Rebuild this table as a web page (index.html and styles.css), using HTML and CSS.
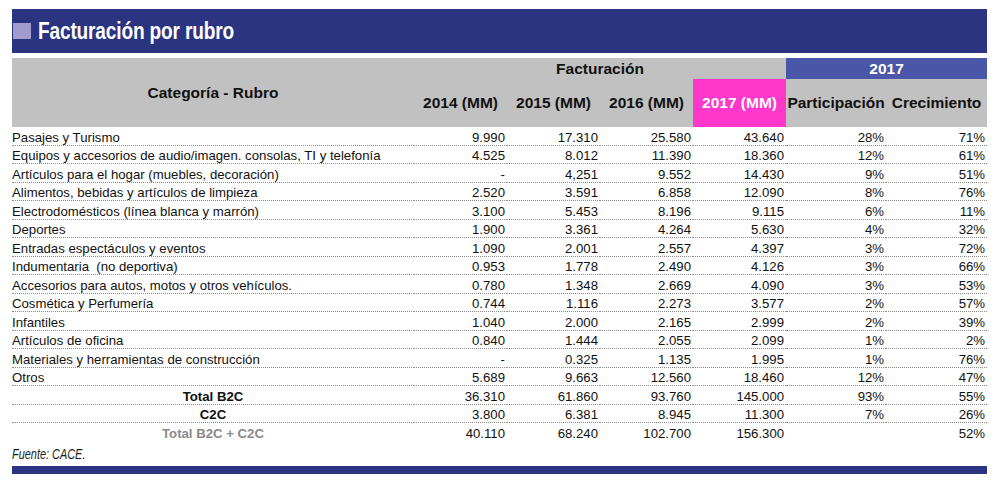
FILE: index.html
```html
<!DOCTYPE html>
<html lang="es">
<head>
<meta charset="utf-8">
<title>Facturación por rubro</title>
<link rel="stylesheet" href="styles.css">
</head>
<body>
<div class="page">
  <div class="titlebar">
    <span class="square"></span>
    <h1 class="title">Facturación por rubro</h1>
  </div>
  <table class="data">
    <colgroup>
      <col class="c-cat"><col class="c-num"><col class="c-num"><col class="c-num"><col class="c-num"><col class="c-part"><col class="c-crec">
    </colgroup>
    <thead>
      <tr class="h1">
        <th rowspan="2" class="hcat">Categoría - Rubro</th>
        <th colspan="4" class="hfact">Facturación</th>
        <th colspan="2" class="hyear">2017</th>
      </tr>
      <tr class="h2">
        <th>2014 (MM)</th>
        <th>2015 (MM)</th>
        <th>2016 (MM)</th>
        <th class="pink">2017 (MM)</th>
        <th>Participación</th>
        <th>Crecimiento</th>
      </tr>
    </thead>
    <tbody>
      <tr><td>Pasajes y Turismo</td><td>9.990</td><td>17.310</td><td>25.580</td><td>43.640</td><td>28%</td><td>71%</td></tr>
      <tr><td>Equipos y accesorios de audio/imagen. consolas, TI y telefonía</td><td>4.525</td><td>8.012</td><td>11.390</td><td>18.360</td><td>12%</td><td>61%</td></tr>
      <tr><td>Artículos para el hogar (muebles, decoración)</td><td>-</td><td>4,251</td><td>9.552</td><td>14.430</td><td>9%</td><td>51%</td></tr>
      <tr><td>Alimentos, bebidas y artículos de limpieza</td><td>2.520</td><td>3.591</td><td>6.858</td><td>12.090</td><td>8%</td><td>76%</td></tr>
      <tr><td>Electrodomésticos (línea blanca y marrón)</td><td>3.100</td><td>5.453</td><td>8.196</td><td>9.115</td><td>6%</td><td>11%</td></tr>
      <tr><td>Deportes</td><td>1.900</td><td>3.361</td><td>4.264</td><td>5.630</td><td>4%</td><td>32%</td></tr>
      <tr><td>Entradas espectáculos y eventos</td><td>1.090</td><td>2.001</td><td>2.557</td><td>4.397</td><td>3%</td><td>72%</td></tr>
      <tr><td>Indumentaria &nbsp;(no deportiva)</td><td>0.953</td><td>1.778</td><td>2.490</td><td>4.126</td><td>3%</td><td>66%</td></tr>
      <tr><td>Accesorios para autos, motos y otros vehículos.</td><td>0.780</td><td>1.348</td><td>2.669</td><td>4.090</td><td>3%</td><td>53%</td></tr>
      <tr><td>Cosmética y Perfumería</td><td>0.744</td><td>1.116</td><td>2.273</td><td>3.577</td><td>2%</td><td>57%</td></tr>
      <tr><td>Infantiles</td><td>1.040</td><td>2.000</td><td>2.165</td><td>2.999</td><td>2%</td><td>39%</td></tr>
      <tr><td>Artículos de oficina</td><td>0.840</td><td>1.444</td><td>2.055</td><td>2.099</td><td>1%</td><td>2%</td></tr>
      <tr><td>Materiales y herramientas de construcción</td><td>-</td><td>0.325</td><td>1.135</td><td>1.995</td><td>1%</td><td>76%</td></tr>
      <tr><td>Otros</td><td>5.689</td><td>9.663</td><td>12.560</td><td>18.460</td><td>12%</td><td>47%</td></tr>
      <tr class="total"><td>Total B2C</td><td>36.310</td><td>61.860</td><td>93.760</td><td>145.000</td><td>93%</td><td>55%</td></tr>
      <tr class="total"><td>C2C</td><td>3.800</td><td>6.381</td><td>8.945</td><td>11.300</td><td>7%</td><td>26%</td></tr>
      <tr class="grand"><td>Total B2C + C2C</td><td>40.110</td><td>68.240</td><td>102.700</td><td>156.300</td><td></td><td>52%</td></tr>
    </tbody>
  </table>
  <p class="source"><span>Fuente: CACE.</span></p>
  <div class="bottombar"></div>
</div>
</body>
</html>
```

FILE: styles.css
```css
html, body {
  margin: 0;
  padding: 0;
  background: #ffffff;
}

.page {
  width: 975px;
  padding: 9px 0 0 12px;
  font-family: "Liberation Sans", Arial, sans-serif;
  color: #111111;
}

.titlebar {
  height: 44px;
  background: #2b3480;
  display: flex;
  align-items: center;
}

.square {
  width: 18px;
  height: 16px;
  margin-left: 1px;
  background: #a29bd0;
  flex: none;
}

.title {
  margin: 0 0 0 7px;
  font-size: 23px;
  font-weight: bold;
  color: #ffffff;
  display: inline-block;
  transform: scaleX(0.83);
  transform-origin: left center;
  white-space: nowrap;
  letter-spacing: -0.2px;
}

.data {
  margin-top: 5px;
  width: 975px;
  border-collapse: collapse;
  table-layout: fixed;
  font-size: 13.2px;
}

.c-cat { width: 402px; }
.c-num { width: 93px; }
.c-part { width: 100px; }
.c-crec { width: 101px; }

.data th {
  background: #c1c1c1;
  font-weight: bold;
  font-size: 15.5px;
  color: #111111;
  padding: 0;
  white-space: nowrap;
}

.h1 { height: 21px; }
.h2 { height: 48px; }

.data th.hyear {
  background: #4a56a7;
  color: #ffffff;
}

.data th.pink {
  background: #ff38cb;
  color: #ffffff;
}

.data td {
  height: 17.5px;
  padding: 0 2px 0 0;
  line-height: 15px;
  vertical-align: bottom;
  text-align: right;
  white-space: nowrap;
  border-bottom: 1px dotted #8c8c8c;
}

.data td:first-child {
  text-align: left;
  padding: 0;
}

.data tr.total td:first-child {
  text-align: center;
  font-weight: bold;
}

.data tr.grand td {
  border-bottom: none;
}

.data tr.grand td:first-child {
  text-align: center;
  font-weight: bold;
  color: #8a8a8a;
}

.source {
  box-sizing: border-box;
  margin: 0;
  height: 25.5px;
  padding-top: 3px;
  line-height: 20px;
  font-size: 14px;
  font-style: italic;
  color: #1a1a1a;
}

.source span {
  display: inline-block;
  transform: scaleX(0.78);
  transform-origin: left center;
}

.bottombar {
  height: 8px;
  background: #2b3480;
}
```
